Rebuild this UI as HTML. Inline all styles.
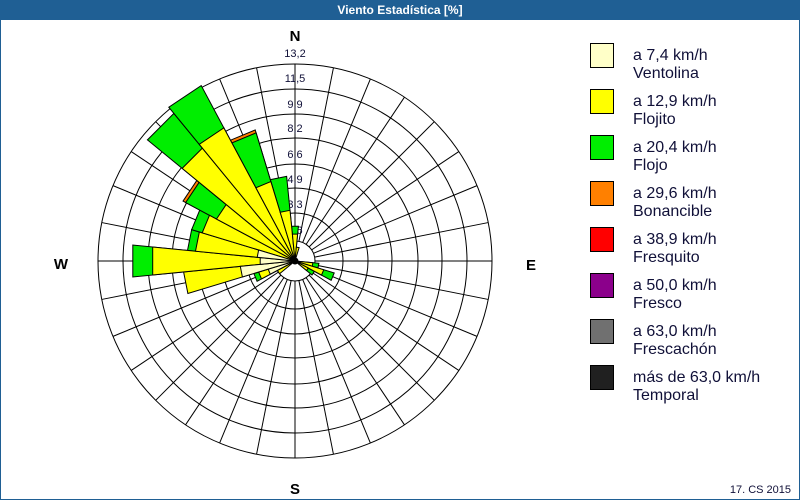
<!DOCTYPE html>
<html><head><meta charset="utf-8"><style>
html,body{margin:0;padding:0;background:#fff}
#w{position:relative;width:798px;height:498px;border:1px solid #1f5f94;background:#fff;overflow:hidden;font-family:"Liberation Sans",sans-serif}
#t{height:19px;background:#1f5f94;color:#fff;font-weight:bold;font-size:12px;text-align:center;line-height:19px}
.lg{position:absolute;left:589px;width:22px;height:23px;border:1px solid #000}
.lt{position:absolute;left:632px;font-size:16px;line-height:18px;color:#101038}
#c{position:absolute;right:8px;bottom:3px;font-size:11px;color:#101038}
</style></head><body><div id="w"><div id="t">Viento Estadística [%]</div>
<svg width="798" height="478" style="position:absolute;left:0;top:19px" viewBox="1 20 798 478">
<g fill="none" stroke="#000" stroke-width="1">
<circle cx="295" cy="261" r="197"/><circle cx="295" cy="261" r="172"/><circle cx="295" cy="261" r="147"/><circle cx="295" cy="261" r="123"/><circle cx="295" cy="261" r="97"/><circle cx="295" cy="261" r="73"/><circle cx="295" cy="261" r="48"/><circle cx="295" cy="261" r="20"/>
</g>
<g stroke="#000" stroke-width="1">
<line x1="295" y1="241" x2="295" y2="64"/><line x1="295" y1="241" x2="295" y2="64" transform="rotate(11.25 295 261)"/><line x1="295" y1="241" x2="295" y2="64" transform="rotate(22.5 295 261)"/><line x1="295" y1="241" x2="295" y2="64" transform="rotate(33.75 295 261)"/><line x1="295" y1="241" x2="295" y2="64" transform="rotate(45 295 261)"/><line x1="295" y1="241" x2="295" y2="64" transform="rotate(56.25 295 261)"/><line x1="295" y1="241" x2="295" y2="64" transform="rotate(67.5 295 261)"/><line x1="295" y1="241" x2="295" y2="64" transform="rotate(78.75 295 261)"/><line x1="295" y1="241" x2="295" y2="64" transform="rotate(90 295 261)"/><line x1="295" y1="241" x2="295" y2="64" transform="rotate(101.25 295 261)"/><line x1="295" y1="241" x2="295" y2="64" transform="rotate(112.5 295 261)"/><line x1="295" y1="241" x2="295" y2="64" transform="rotate(123.75 295 261)"/><line x1="295" y1="241" x2="295" y2="64" transform="rotate(135 295 261)"/><line x1="295" y1="241" x2="295" y2="64" transform="rotate(146.25 295 261)"/><line x1="295" y1="241" x2="295" y2="64" transform="rotate(157.5 295 261)"/><line x1="295" y1="241" x2="295" y2="64" transform="rotate(168.75 295 261)"/><line x1="295" y1="241" x2="295" y2="64" transform="rotate(180 295 261)"/><line x1="295" y1="241" x2="295" y2="64" transform="rotate(191.25 295 261)"/><line x1="295" y1="241" x2="295" y2="64" transform="rotate(202.5 295 261)"/><line x1="295" y1="241" x2="295" y2="64" transform="rotate(213.75 295 261)"/><line x1="295" y1="241" x2="295" y2="64" transform="rotate(225 295 261)"/><line x1="295" y1="241" x2="295" y2="64" transform="rotate(236.25 295 261)"/><line x1="295" y1="241" x2="295" y2="64" transform="rotate(247.5 295 261)"/><line x1="295" y1="241" x2="295" y2="64" transform="rotate(258.75 295 261)"/><line x1="295" y1="241" x2="295" y2="64" transform="rotate(270 295 261)"/><line x1="295" y1="241" x2="295" y2="64" transform="rotate(281.25 295 261)"/><line x1="295" y1="241" x2="295" y2="64" transform="rotate(292.5 295 261)"/><line x1="295" y1="241" x2="295" y2="64" transform="rotate(303.75 295 261)"/><line x1="295" y1="241" x2="295" y2="64" transform="rotate(315 295 261)"/><line x1="295" y1="241" x2="295" y2="64" transform="rotate(326.25 295 261)"/><line x1="295" y1="241" x2="295" y2="64" transform="rotate(337.5 295 261)"/><line x1="295" y1="241" x2="295" y2="64" transform="rotate(348.75 295 261)"/>
</g>
<g font-size="11" fill="#101038" text-anchor="middle" font-family="Liberation Sans,sans-serif">
<text x="295" y="57">13,2</text><text x="295" y="82">11,5</text><text x="295" y="108">9,9</text><text x="295" y="132">8,2</text><text x="295" y="158">6,6</text><text x="295" y="183">4,9</text><text x="295" y="208">3,3</text><text x="295" y="234">1,6</text>
</g>
<g stroke="#000" stroke-width="1" transform="translate(295 261)">
<g fill="#ff8000">
<polygon points="0,0 -12.4,-126.4 12.4,-126.4" transform="rotate(303.75)"/>
<polygon points="0,0 -13.4,-136.3 13.4,-136.3" transform="rotate(337.5)"/>
</g>
<g fill="#00ee00">
<polygon points="0,0 -4.2,-42.8 4.2,-42.8" transform="rotate(247.5)"/>
<polygon points="0,0 -16,-162.2 16,-162.2" transform="rotate(270)"/>
<polygon points="0,0 -10.6,-107.5 10.6,-107.5" transform="rotate(281.25)"/>
<polygon points="0,0 -10.6,-107.5 10.6,-107.5" transform="rotate(292.5)"/>
<polygon points="0,0 -12.2,-123.4 12.2,-123.4" transform="rotate(303.75)"/>
<polygon points="0,0 -18.7,-190 18.7,-190" transform="rotate(315)"/>
<polygon points="0,0 -19.5,-198 19.5,-198" transform="rotate(326.25)"/>
<polygon points="0,0 -13.1,-133.3 13.1,-133.3" transform="rotate(337.5)"/>
<polygon points="0,0 -8.3,-84.6 8.3,-84.6" transform="rotate(348.75)"/>
<polygon points="0,0 -3.4,-34.8 3.4,-34.8"/>
<polygon points="0,0 -2.4,-23.9 2.4,-23.9" transform="rotate(101.25)"/>
<polygon points="0,0 -4,-40.8 4,-40.8" transform="rotate(112.5)"/>
<polygon points="0,0 -2.2,-21.9 2.2,-21.9" transform="rotate(123.75)"/>
</g>
<g fill="#ffff00">
<polygon points="0,0 -2,-19.9 2,-19.9" transform="rotate(236.25)"/>
<polygon points="0,0 -3.7,-37.8 3.7,-37.8" transform="rotate(247.5)"/>
<polygon points="0,0 -11,-111.4 11,-111.4" transform="rotate(258.75)"/>
<polygon points="0,0 -14,-142.3 14,-142.3" transform="rotate(270)"/>
<polygon points="0,0 -9.8,-99.5 9.8,-99.5" transform="rotate(281.25)"/>
<polygon points="0,0 -9.5,-96.5 9.5,-96.5" transform="rotate(292.5)"/>
<polygon points="0,0 -8.7,-88.6 8.7,-88.6" transform="rotate(303.75)"/>
<polygon points="0,0 -14.3,-145.3 14.3,-145.3" transform="rotate(315)"/>
<polygon points="0,0 -14.8,-150.2 14.8,-150.2" transform="rotate(326.25)"/>
<polygon points="0,0 -8.1,-82.6 8.1,-82.6" transform="rotate(337.5)"/>
<polygon points="0,0 -5,-50.7 5,-50.7" transform="rotate(348.75)"/>
<polygon points="0,0 -2.6,-26.9 2.6,-26.9"/>
<polygon points="0,0 -1.4,-13.9 1.4,-13.9" transform="rotate(11.25)"/>
<polygon points="0,0 -1.8,-17.9 1.8,-17.9" transform="rotate(101.25)"/>
<polygon points="0,0 -2.9,-29.9 2.9,-29.9" transform="rotate(112.5)"/>
<polygon points="0,0 -1.5,-14.9 1.5,-14.9" transform="rotate(123.75)"/>
</g>
<g fill="#ffffc8">
<polygon points="0,0 -2.7,-27.9 2.7,-27.9" transform="rotate(247.5)"/>
<polygon points="0,0 -5.4,-54.7 5.4,-54.7" transform="rotate(258.75)"/>
<polygon points="0,0 -3.4,-34.8 3.4,-34.8" transform="rotate(270)"/>
<polygon points="0,0 -3.7,-37.8 3.7,-37.8" transform="rotate(281.25)"/>
</g>
<circle cx="0" cy="0" r="3" fill="#000"/>
</g>
<g font-size="15" font-weight="bold" fill="#000" text-anchor="middle" font-family="Liberation Sans,sans-serif">
<text x="295" y="41">N</text><text x="295" y="494">S</text><text x="61" y="269">W</text><text x="531" y="270">E</text>
</g>
</svg>
<div class="lg" style="top:42px;background:#ffffc8"></div><div class="lt" style="top:46px">a 7,4 km/h<br>Ventolina</div>
<div class="lg" style="top:88px;background:#ffff00"></div><div class="lt" style="top:92px">a 12,9 km/h<br>Flojito</div>
<div class="lg" style="top:134px;background:#00ee00"></div><div class="lt" style="top:138px">a 20,4 km/h<br>Flojo</div>
<div class="lg" style="top:180px;background:#ff8000"></div><div class="lt" style="top:184px">a 29,6 km/h<br>Bonancible</div>
<div class="lg" style="top:226px;background:#ff0000"></div><div class="lt" style="top:230px">a 38,9 km/h<br>Fresquito</div>
<div class="lg" style="top:272px;background:#8b008b"></div><div class="lt" style="top:276px">a 50,0 km/h<br>Fresco</div>
<div class="lg" style="top:318px;background:#707070"></div><div class="lt" style="top:322px">a 63,0 km/h<br>Frescachón</div>
<div class="lg" style="top:364px;background:#202020"></div><div class="lt" style="top:368px">más de 63,0 km/h<br>Temporal</div>
<div id="c">17. CS 2015</div>
</div></body></html>
